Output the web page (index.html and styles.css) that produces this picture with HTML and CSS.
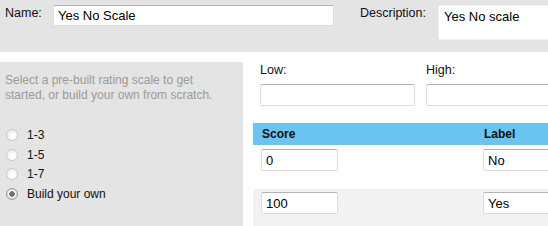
FILE: index.html
```html
<!DOCTYPE html>
<html lang="en">
<head>
  <meta charset="UTF-8" />
  <title>Rating Scale</title>
  <link rel="stylesheet" href="styles.css">
</head>
<body>

  <div class="top-bar">
    <label class="top-label" for="scaleName">Name:</label>
    <input id="scaleName" class="name-input" type="text" value="Yes No Scale">
    <label class="top-label desc-label" for="scaleDesc">Description:</label>
    <textarea id="scaleDesc" class="desc-input">Yes No scale</textarea>
  </div>

  <div class="main">
    <div class="presets">
      <p class="hint">Select a pre-built rating scale to get<br>started, or build your own from scratch.</p>
      <label class="preset"><input type="radio" name="preset"> 1-3</label>
      <label class="preset"><input type="radio" name="preset"> 1-5</label>
      <label class="preset"><input type="radio" name="preset"> 1-7</label>
      <label class="preset"><input type="radio" name="preset" checked> Build your own</label>
    </div>

    <div class="editor">
      <div class="range">
        <div class="range-field">
          <label for="low">Low:</label>
          <input id="low" type="text">
        </div>
        <div class="range-field">
          <label for="high">High:</label>
          <input id="high" type="text">
        </div>
      </div>

      <div class="score-head">
        <div class="col-score">Score</div>
        <div class="col-label">Label</div>
      </div>
      <div class="score-row">
        <div class="col-score"><input class="score-input" type="text" value="0"></div>
        <div class="col-label"><input class="label-input" type="text" value="No"></div>
      </div>
      <div class="score-row alt">
        <div class="col-score"><input class="score-input" type="text" value="100"></div>
        <div class="col-label"><input class="label-input" type="text" value="Yes"></div>
      </div>
    </div>
  </div>

</body>
</html>
```

FILE: styles.css
```css
* {
  box-sizing: border-box;
}
body {
  margin: 0;
  font-family: 'Liberation Sans', Arial, sans-serif;
  font-size: 12px;
  color: #111;
  background: white;
  overflow: hidden;
  width: 548px;
}

input[type="text"], textarea {
  font-family: 'Liberation Sans', Arial, sans-serif;
  font-size: 13px;
  color: #000;
  background: white;
  border: 1px solid #dcdcdc;
  border-top-color: #b4b4b4;
  border-radius: 2px;
  padding: 2px 4px;
  margin: 0;
  outline: none;
  flex-shrink: 0;
}

/* Top name / description bar */
.top-bar {
  display: flex;
  align-items: flex-start;
  height: 52px;
  background: #e4e4e4;
  padding: 5px 0 0 5px;
  overflow: hidden;
}
.top-label {
  font-size: 12.5px;
  padding-top: 1px;
  width: 48px;
  flex-shrink: 0;
}
.name-input {
  width: 281px;
  height: 21px;
  border-color: #f2f2f2;
}
.desc-label {
  width: 78px;
  margin-left: 26px;
}
.desc-input {
  width: 130px;
  height: 35px;
  resize: none;
  border-color: #f2f2f2;
  padding: 3px 5px;
}

.main {
  display: flex;
  margin-top: 10px;
}

/* Left presets panel */
.presets {
  width: 243px;
  flex-shrink: 0;
  height: 164px;
  background: #e4e4e4;
  padding: 11px 0 0 5px;
}
.hint {
  margin: 0 0 22px;
  color: #9a9a9a;
  line-height: 15px;
  white-space: nowrap;
}
.preset {
  display: flex;
  align-items: center;
  height: 19.7px;
}
.preset input {
  appearance: none;
  -webkit-appearance: none;
  width: 12px;
  height: 12px;
  margin: 0 9px 0 1px;
  border-radius: 50%;
  border: 1px solid #c9c9c9;
  background: radial-gradient(circle at 60% 65%, #fdfdfd 30%, #e2e2e2 100%);
}
.preset input:checked {
  background: radial-gradient(circle, #6e6e6e 0 2.5px, #f4f4f4 3px 3.6px, #d6d6d6 5px);
  border-color: #9c9c9c;
}

/* Right editor */
.editor {
  flex: 1;
  min-width: 0;
  margin-left: 10px;
  overflow: hidden;
}
.range {
  display: flex;
  gap: 11px;
  padding: 1px 0 0 7px;
  height: 61px;
}
.range-field {
  flex-shrink: 0;
}
.range-field label {
  display: block;
  font-size: 12.5px;
  height: 21px;
}
.range-field input {
  width: 155px;
  height: 22px;
}

.score-head {
  display: flex;
  height: 22px;
  align-items: center;
  background: #6ac3f1;
  font-weight: bold;
}
.score-head .col-score {
  padding-left: 9px;
}
.col-score {
  width: 230px;
  flex-shrink: 0;
  padding-left: 8px;
}
.col-label {
  flex-shrink: 0;
}
.score-head .col-label {
  padding-left: 1px;
}

.score-row {
  display: flex;
  height: 44px;
  padding-top: 4px;
}
.score-row.alt {
  background: #f2f2f2;
  padding-top: 3px;
}
.score-input {
  width: 77px;
  height: 22px;
}
.label-input {
  width: 80px;
  height: 22px;
}
```
